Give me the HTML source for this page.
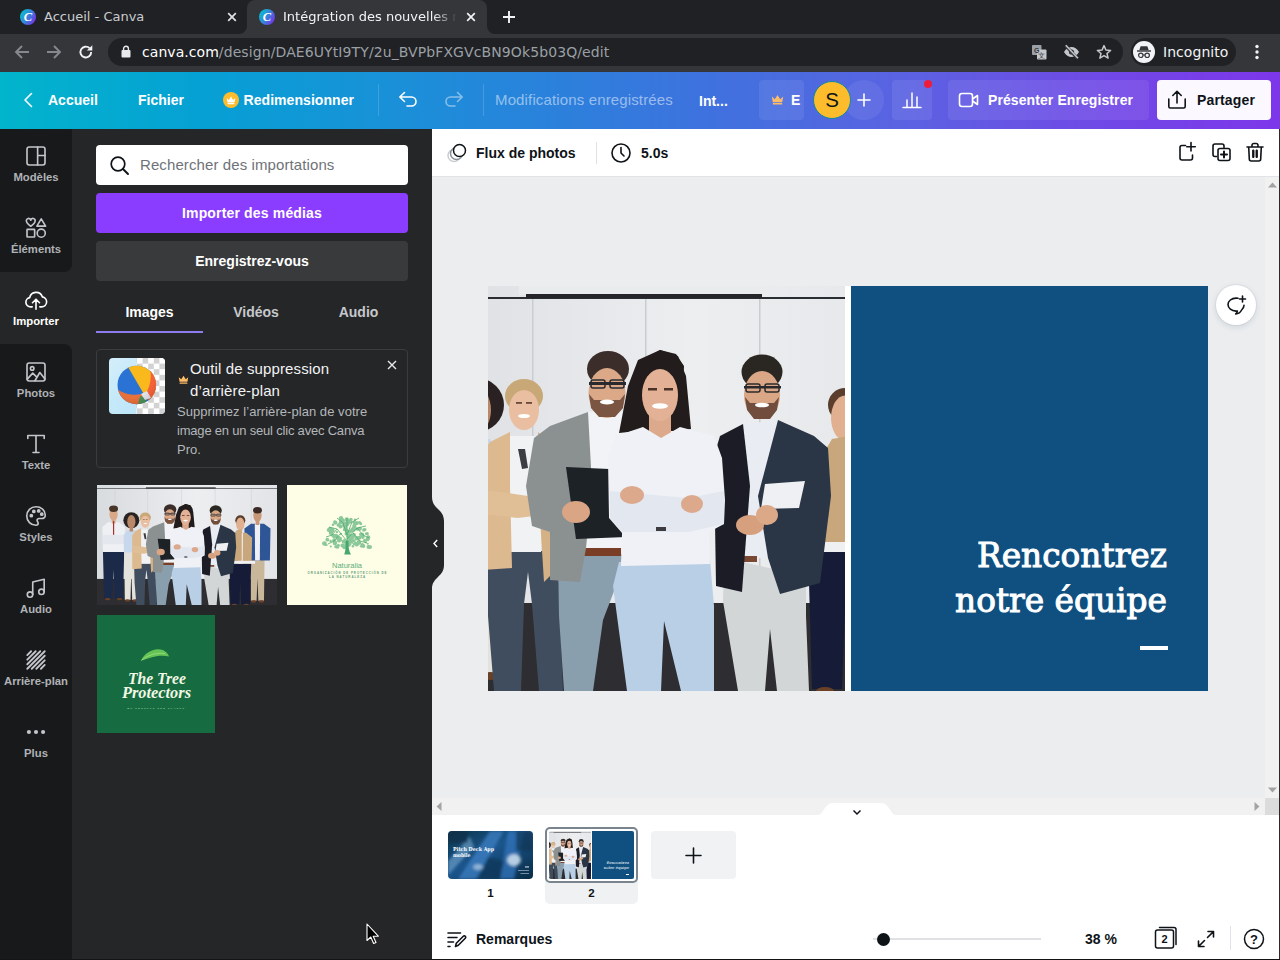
<!DOCTYPE html>
<html lang="fr">
<head>
<meta charset="utf-8">
<title>Intégration des nouvelles recrues - Canva</title>
<style>
*{box-sizing:border-box;margin:0;padding:0}
html,body{width:1280px;height:960px;overflow:hidden;background:#fff}
body{position:relative;font-family:"Liberation Sans",sans-serif;color:#fff}
.abs{position:absolute}
/* ---------- browser chrome ---------- */
#tabbar{position:absolute;left:0;top:0;width:1280px;height:34px;background:#202124}
#toolbar{position:absolute;left:0;top:34px;width:1280px;height:38px;background:#35363a}
.chrome{font-family:"DejaVu Sans","Liberation Sans",sans-serif}
.tabtitle{position:absolute;top:8px;font-size:13px;line-height:17px;white-space:nowrap;overflow:hidden}
#activetab{position:absolute;left:247px;top:0;width:240px;height:34px;background:#35363a;border-radius:8px 8px 0 0}
#omnibox{position:absolute;left:108px;top:38px;width:1015px;height:28px;border-radius:14px;background:#202124}
#url{position:absolute;left:142px;top:43px;font-size:14px;line-height:18px;color:#9aa0a6;white-space:nowrap;letter-spacing:0.05px}
#url b{font-weight:normal;color:#fff}
/* ---------- canva header ---------- */
#hdr{position:absolute;left:0;top:72px;width:1280px;height:56.700px;z-index:4;background:linear-gradient(90deg,#02b4cc 0%,#06a0d4 16%,#1a90d8 31%,#2c80dc 44%,#3e72de 55%,#5a63e2 70%,#7049e6 86%,#7d36ea 100%)}
.hb{position:absolute;font-weight:bold;font-size:14px;line-height:20px;white-space:nowrap;color:#fff}
/* ---------- left rail ---------- */
#rail{position:absolute;left:0;top:128px;width:72px;height:832px;background:#252627}
.ri{position:absolute;left:0;width:72px;height:72px;text-align:center;color:#afb2b6;font-size:11.300px;font-weight:bold}
.ri span{position:absolute;left:-10px;width:92px;top:41px;line-height:16px;text-align:center}
.ri svg{position:absolute;left:24px;top:16px;transform:scale(1.090);color:#c3c6ca}
.ri[style*="#fff"] svg{color:#fff}
#panel{position:absolute;left:72px;top:128px;width:360px;height:832px;background:#252627}
/* ---------- editor ---------- */
#edbar{position:absolute;left:432px;top:128px;width:848px;height:49px;background:#fff;border-bottom:1px solid #e1e4e7}
#stage{position:absolute;left:432px;top:177px;width:848px;height:638px;background:#ebedef}
#bottom{position:absolute;left:432px;top:815px;width:848px;height:145px;background:#fff}
.dk{color:#0e1318}
.pb{left:24px;width:312px;height:40px;border-radius:4px;color:#fff;font-weight:bold;font-size:14px;line-height:40px;text-align:center}
.tb{top:174px;height:20px;line-height:20px;font-size:14px;font-weight:bold;text-align:center;color:#c5c8cc}
</style>
</head>
<body>
<!--PHOTOSYM--><svg width="0" height="0" style="position:absolute"><defs><linearGradient id="wallg" x1="0" y1="0" x2="1" y2="0"><stop offset="0" stop-color="#d9dcdf"/><stop offset="0.300" stop-color="#e3e5e8"/><stop offset="0.550" stop-color="#eceef0"/><stop offset="1" stop-color="#e2e4e7"/></linearGradient><filter id="pblur" x="0" y="0" width="1" height="1"><feGaussianBlur stdDeviation="0.550"/></filter><symbol id="teamphoto" viewBox="0 0 608 405" preserveAspectRatio="none"><g filter="url(#pblur)"><rect x="0" y="0" width="608" height="405" fill="url(#wallg)"/><rect x="0" y="317" width="608" height="88" fill="#2d2e31"/><rect x="0" y="11" width="608" height="2" fill="#2c2e32"/><rect x="158" y="0" width="247" height="9" fill="#e9ebed"/><rect x="165" y="8" width="236" height="4" fill="#25272b"/><rect x="171" y="13" width="1.5" height="300" fill="#c9ccd0"/><rect x="284" y="13" width="1.5" height="300" fill="#c9ccd0"/><rect x="398" y="13" width="1.5" height="300" fill="#c9ccd0"/><rect x="60" y="13" width="1.500" height="300" fill="#c9ccd0"/><rect x="520" y="13" width="1.500" height="300" fill="#c9ccd0"/><polygon points="20,222 92,222 88,383 59,383 56,286 53,383 24,383" fill="#1f2a4a"/><polygon points="18,142 37,126 75,126 94,142 92,226 20,226" fill="#eef0f4"/><rect x="50" y="116" width="12" height="14" fill="#d9a888"/><ellipse cx="56" cy="98" rx="14" ry="22.5" fill="#d9a888"/><ellipse cx="56" cy="80" rx="15" ry="11" fill="#4a3527"/><ellipse cx="36" cy="385" rx="9" ry="4" fill="#6b3f26"/><ellipse cx="76" cy="385" rx="9" ry="4" fill="#6b3f26"/><rect x="54" y="122" width="4" height="75" fill="#a8322c"/><polygon points="20,168 92,168 92,200 20,200" fill="#e4e7ee"/><polygon points="518,251 566,251 564,391 545,391 542,315 539,391 520,391" fill="#c9b79a"/><polygon points="498,147 520,131 564,131 586,147 584,255 500,255" fill="#2e5596"/><polygon points="533,131 551,131 550,255 534,255" fill="#eef0f4"/><rect x="536" y="121" width="12" height="14" fill="#c99878"/><ellipse cx="542" cy="102" rx="14" ry="22.5" fill="#c99878"/><ellipse cx="542" cy="85" rx="15" ry="11" fill="#3a2c25"/><ellipse cx="529" cy="393" rx="9" ry="4" fill="#6b3f26"/><ellipse cx="555" cy="393" rx="9" ry="4" fill="#6b3f26"/><ellipse cx="484" cy="119" rx="17" ry="17" fill="#5a3d2c"/><polygon points="447,261 521,261 517,403 487,403 484,325 481,403 451,403" fill="#151e39"/><polygon points="444,177 464,161 504,161 524,177 522,265 446,265" fill="#c9a77b"/><polygon points="475,161 493,161 492,265 476,265" fill="#f0f1f3"/><rect x="478" y="151" width="12" height="14" fill="#e0b090"/><ellipse cx="484" cy="132" rx="14" ry="22.5" fill="#e0b090"/><ellipse cx="464" cy="405" rx="9" ry="4" fill="#6b3f26"/><ellipse cx="504" cy="405" rx="9" ry="4" fill="#6b3f26"/><rect x="456" y="256" width="78" height="10" fill="#eef0f2"/><polygon points="462,168 471,153 489,150 489,256 460,256" fill="#c9a77b"/><ellipse cx="116" cy="119" rx="27" ry="27" fill="#2a2422"/><polygon points="92,224 140,224 138,388 119,388 116,288 113,388 94,388" fill="#e4e2dc"/><polygon points="90,169 103,153 129,153 142,169 141,228 91,228" fill="#c8d8ec"/><rect x="110" y="143" width="12" height="14" fill="#b98868"/><ellipse cx="116" cy="124" rx="14" ry="22.5" fill="#b98868"/><ellipse cx="103" cy="390" rx="9" ry="4" fill="#6b3f26"/><ellipse cx="129" cy="390" rx="9" ry="4" fill="#6b3f26"/><polygon points="125,265 197,265 199,330 202,405 178,405 171,318 167,286 163,318 160,405 133,405 127,330" fill="#414e5e"/><polygon points="145,150 183,150 180,266 149,266" fill="#f1f2f4"/><polygon points="149,146 129,156 119,170 119,284 151,282 149,200" fill="#dcb98f"/><polygon points="177,146 189,158 197,200 195,284 183,296 177,200" fill="#d5b186"/><polygon points="119,203 167,210 189,205 189,228 157,232 119,228" fill="#e0bf97"/><ellipse cx="163" cy="110" rx="19" ry="17" fill="#c9a877"/><ellipse cx="163" cy="124" rx="15" ry="20" fill="#e9bea1"/><ellipse cx="163" cy="130" rx="6" ry="2" fill="#fff"/><rect x="155" y="116" width="6" height="1.8" fill="#6a4a3a"/><rect x="165" y="116" width="6" height="1.8" fill="#6a4a3a"/><polygon points="157,163 164,163 167,182 161,183" fill="#3a3d42"/><polygon points="197,268 262,268 255,300 242,334 232,405 203,405 198,330" fill="#8a9fae"/><polygon points="225,126 264,126 266,264 223,264" fill="#f1f3f6"/><rect x="222" y="262" width="38" height="8" fill="#7a3e28"/><polygon points="227,126 189,140 173,152 165,200 171,240 189,246 189,294 219,296 225,262 231,200" fill="#8b9091"/><polygon points="205,181 248,183 265,251 215,253" fill="#1e2025"/><ellipse cx="215" cy="226" rx="14" ry="11" fill="#d9a585"/><ellipse cx="247" cy="83" rx="21" ry="18" fill="#3b2f2a"/><ellipse cx="246" cy="107" rx="18.5" ry="25" fill="#dba888"/><polygon points="228,108 233,114 259,114 264,108 262,122 254,131 238,131 230,122" fill="#7a5443"/><ellipse cx="246" cy="116" rx="7" ry="2.5" fill="#fff"/><rect x="228" y="96" width="37" height="3" fill="#2a2a2e"/><rect x="230" y="94" width="14" height="8" fill="none" stroke="#2a2a2e" stroke-width="1.500" rx="2"/><rect x="249" y="94" width="14" height="8" fill="none" stroke="#2a2a2e" stroke-width="1.500" rx="2"/><polygon points="363,272 445,290 445,330 448,405 416,405 409,343 404,405 377,405 362,315" fill="#d3d6d6"/><polygon points="381,138 419,134 415,272 379,272" fill="#e9edf3"/><rect x="379" y="270" width="17" height="6" fill="#7a4630"/><polygon points="382,138 359,150 353,170 355,300 381,306 389,200" fill="#1b1e27"/><polygon points="417,134 453,150 467,162 470,210 459,297 419,308 407,272 397,210" fill="#2b3444"/><polygon points="404,198 444,195 438,222 400,223" fill="#eef0f3"/><ellipse cx="389" cy="239" rx="14" ry="10" fill="#d6a07e"/><ellipse cx="406" cy="229" rx="11" ry="10" fill="#dba888"/><ellipse cx="401" cy="86" rx="20.5" ry="17.5" fill="#2b2623"/><ellipse cx="401" cy="109" rx="18" ry="24" fill="#d9a785"/><polygon points="384,111 389,117 413,117 418,111 416,124 409,133 393,133 386,124" fill="#6f4d3d"/><ellipse cx="401" cy="119" rx="7" ry="2.3" fill="#fff"/><rect x="383" y="100" width="37" height="2.5" fill="#2a2a2e"/><rect x="385" y="98" width="14" height="8" fill="none" stroke="#2a2a2e" stroke-width="1.500" rx="2"/><rect x="404" y="98" width="14" height="8" fill="none" stroke="#2a2a2e" stroke-width="1.500" rx="2"/><polygon points="258,276 349,274 353,320 353,405 320,405 303,335 300,405 266,405 252,300" fill="#b9cfe6"/><polygon points="299,64 317,70 325,90 330,143 315,145 277,145 258,147 267,100 277,74" fill="#241c1b"/><rect x="288" y="128" width="22" height="24" fill="#dca98c"/><polygon points="282,141 255,150 247,172 248,232 261,247 260,280 349,278 348,246 363,238 364,214 361,172 353,150 319,141 300,152" fill="#eff1f6"/><polygon points="249,205 327,212 363,205 363,238 327,246 261,246 249,232" fill="#e3e7ef"/><ellipse cx="271" cy="209" rx="12" ry="9" fill="#dca98c"/><rect x="295" y="241" width="10" height="4" fill="#3a3a40"/><ellipse cx="331" cy="218" rx="11" ry="9" fill="#dca98c"/><ellipse cx="299" cy="109" rx="18" ry="26" fill="#e3b296"/><ellipse cx="299" cy="120" rx="8" ry="2.8" fill="#fff"/><rect x="287" y="102" width="9" height="2.5" fill="#4a3028"/><rect x="303" y="102" width="9" height="2.5" fill="#4a3028"/><polygon points="299,64 279,76 277,100 287,82 303,78 319,86 322,104 323,80 315,68" fill="#241c1b"/></g></symbol></defs></svg><!--/PHOTOSYM-->
<!-- browser chrome -->
<div id="tabbar" class="chrome">
  <svg class="abs" style="left:20px;top:9px" width="16" height="16" viewBox="0 0 16 16"><defs><linearGradient id="cg" x1="0" y1="0.2" x2="1" y2="0.8"><stop offset="0" stop-color="#00c4cc"/><stop offset="0.55" stop-color="#3f7bdc"/><stop offset="1" stop-color="#7d2ae8"/></linearGradient></defs><circle cx="8" cy="8" r="8" fill="url(#cg)"/><text x="8" y="12.2" font-family="Liberation Serif,serif" font-style="italic" font-weight="bold" font-size="12.5" fill="#fff" text-anchor="middle">C</text></svg>
  <div class="tabtitle" style="left:44px;width:180px;color:#c9ccd0">Accueil - Canva</div>
  <svg class="abs" style="left:227px;top:12px" width="10" height="10" viewBox="0 0 10 10"><path d="M1.2 1.2L8.8 8.8M8.8 1.2L1.2 8.8" stroke="#dfe1e5" stroke-width="1.7" fill="none"/></svg>
  <div id="activetab"></div>
  <svg class="abs" style="left:239px;top:26px" width="8" height="8" viewBox="0 0 8 8"><path d="M8 0V8H0A8 8 0 0 0 8 0Z" fill="#35363a"/></svg>
  <svg class="abs" style="left:487px;top:26px" width="8" height="8" viewBox="0 0 8 8"><path d="M0 0V8H8A8 8 0 0 1 0 0Z" fill="#35363a"/></svg>
  <svg class="abs" style="left:259px;top:9px" width="16" height="16" viewBox="0 0 16 16"><circle cx="8" cy="8" r="8" fill="url(#cg)"/><text x="8" y="12.2" font-family="Liberation Serif,serif" font-style="italic" font-weight="bold" font-size="12.5" fill="#fff" text-anchor="middle">C</text></svg>
  <div class="tabtitle" style="left:283px;width:176px;color:#f1f3f4;-webkit-mask-image:linear-gradient(90deg,#000 0,#000 150px,transparent 174px);mask-image:linear-gradient(90deg,#000 0,#000 150px,transparent 174px)">Intégration des nouvelles recrues</div>
  <svg class="abs" style="left:466px;top:12px" width="10" height="10" viewBox="0 0 10 10"><path d="M1.2 1.2L8.8 8.8M8.8 1.2L1.2 8.8" stroke="#f1f3f4" stroke-width="1.7" fill="none"/></svg>
  <svg class="abs" style="left:502px;top:10px" width="14" height="14" viewBox="0 0 14 14"><path d="M7 1V13M1 7H13" stroke="#f1f3f4" stroke-width="1.9" fill="none"/></svg>
</div>
<div id="toolbar" class="chrome"></div>
<svg class="abs" style="left:14px;top:44px" width="16" height="16" viewBox="0 0 16 16"><path d="M15 8H2.5M8 2L2 8L8 14" stroke="#85888c" stroke-width="1.9" fill="none"/></svg>
<svg class="abs" style="left:46px;top:44px" width="16" height="16" viewBox="0 0 16 16"><path d="M1 8H13.5M8 2L14 8L8 14" stroke="#85888c" stroke-width="1.9" fill="none"/></svg>
<svg class="abs" style="left:78px;top:44px" width="16" height="16" viewBox="0 0 16 16"><path d="M13.2 8A5.4 5.4 0 1 1 11.6 4.2" stroke="#f1f3f4" stroke-width="1.9" fill="none"/><path d="M14.3 1.2V6.6H8.9Z" fill="#f1f3f4"/></svg>
<div id="omnibox"></div>
<svg class="abs" style="left:121px;top:45px" width="10" height="13" viewBox="0 0 10 13"><rect x="0.5" y="5" width="9" height="7.5" rx="1" fill="#e8eaed"/><path d="M2.6 5.5V3.6A2.4 2.4 0 0 1 7.4 3.6V5.5" stroke="#e8eaed" stroke-width="1.4" fill="none"/></svg>
<div id="url" class="chrome"><b>canva.com</b><span style="letter-spacing:0.1px">/design/DAE6UYtI9TY/2u_BVPbFXGVcBN9Ok5b03Q/edit</span></div>
<!-- translate / eye-off / star -->
<svg class="abs" style="left:1031px;top:44px" width="16" height="16" viewBox="0 0 16 16"><rect x="1" y="1" width="9.5" height="10" rx="1" fill="#9aa0a6"/><rect x="6" y="5.5" width="9.5" height="10" rx="1" fill="#c4c7cc"/><text x="5.7" y="8.8" font-size="7" font-weight="bold" fill="#35363a" text-anchor="middle" font-family="Liberation Sans,sans-serif">G</text><text x="10.8" y="13.8" font-size="7" fill="#35363a" text-anchor="middle" font-family="Liberation Sans,sans-serif">文</text></svg>
<svg class="abs" style="left:1063px;top:44px" width="17" height="16" viewBox="0 0 17 16"><path d="M1 8C3 4.400 5.500 3 8.500 3C11.500 3 14 4.400 16 8C14 11.600 11.500 13 8.500 13C5.500 13 3 11.600 1 8Z" fill="#c4c7cc"/><circle cx="8.500" cy="8" r="2.600" fill="#35363a"/><path d="M2.500 1.500L14.500 14.500" stroke="#35363a" stroke-width="3.200"/><path d="M2.800 1.200L15 14.200" stroke="#c4c7cc" stroke-width="1.500"/></svg>
<svg class="abs" style="left:1096px;top:44px" width="16" height="16" viewBox="0 0 16 16"><path d="M8 1.600L9.900 6L14.600 6.400L11 9.500L12.100 14.100L8 11.700L3.900 14.100L5 9.500L1.400 6.400L6.100 6Z" stroke="#c4c7cc" stroke-width="1.500" fill="none" stroke-linejoin="round"/></svg>
<div class="abs" style="left:1131px;top:38px;width:105px;height:28px;border-radius:14px;background:#202124"></div>
<svg class="abs" style="left:1133px;top:41px" width="22" height="22" viewBox="0 0 22 22"><circle cx="11" cy="11" r="11" fill="#f1f3f4"/><path d="M6.300 9.300L7.600 5.200H14.400L15.700 9.300Z" fill="#35363a"/><rect x="4" y="9.300" width="14" height="1.400" fill="#35363a"/><circle cx="7.800" cy="14.300" r="2.200" stroke="#35363a" stroke-width="1.200" fill="none"/><circle cx="14.200" cy="14.300" r="2.200" stroke="#35363a" stroke-width="1.200" fill="none"/><path d="M10 14H12" stroke="#35363a" stroke-width="1.200"/></svg>
<div class="abs chrome" style="left:1163px;top:43px;font-size:14px;line-height:18px;letter-spacing:0.050px;color:#f1f3f4">Incognito</div>
<svg class="abs" style="left:1255px;top:44px" width="4" height="16" viewBox="0 0 4 16"><circle cx="2" cy="2.500" r="1.700" fill="#f1f3f4"/><circle cx="2" cy="8" r="1.700" fill="#f1f3f4"/><circle cx="2" cy="13.500" r="1.700" fill="#f1f3f4"/></svg>
<!-- canva header -->
<div id="hdr">
  <svg class="abs" style="left:22px;top:20px" width="12" height="16" viewBox="0 0 12 16"><path d="M9.500 1.500L3 8L9.500 14.500" stroke="#fff" stroke-width="1.600" fill="none" stroke-linecap="round" stroke-linejoin="round"/></svg>
  <div class="hb" style="left:48px;top:18px">Accueil</div>
  <div class="hb" style="left:138px;top:18px">Fichier</div>
  <svg class="abs" style="left:223px;top:20px" width="16" height="16" viewBox="0 0 16 16"><circle cx="8" cy="8" r="8" fill="#fdbc2c"/><path d="M3.700 6L5.900 8L8 4.600L10.100 8L12.300 6L11.500 10.400H4.500Z" fill="#fff"/><rect x="4.500" y="11" width="7" height="1.200" rx="0.500" fill="#fff"/></svg>
  <div class="hb" style="left:243.5px;top:18px;letter-spacing:0.06px">Redimensionner</div>
  <div class="abs" style="left:378px;top:12px;width:1px;height:32px;background:rgba(255,255,255,0.160)"></div>
  <svg class="abs" style="left:396px;top:16px" width="24" height="24" viewBox="0 0 24 24"><path d="M8.500 4.500L3.800 9L8.500 13.500M4.200 9H15.500A4.500 4.500 0 0 1 15.500 18H11" stroke="#fff" stroke-width="1.600" fill="none" stroke-linecap="round" stroke-linejoin="round"/></svg>
  <svg class="abs" style="left:442px;top:16px;opacity:0.45" width="24" height="24" viewBox="0 0 24 24"><path d="M15.500 4.500L20.200 9L15.500 13.500M19.800 9H8.500A4.500 4.500 0 0 0 8.500 18H13" stroke="#fff" stroke-width="1.600" fill="none" stroke-linecap="round" stroke-linejoin="round"/></svg>
  <div class="abs" style="left:483px;top:12px;width:1px;height:32px;background:rgba(255,255,255,0.160)"></div>
  <div class="hb" style="left:495px;top:18px;font-weight:normal;font-size:15px;letter-spacing:0.14px;color:rgba(255,255,255,0.5)">Modifications enregistrées</div>
  <div class="hb" style="left:699px;top:19px">Int...</div>
  <div class="abs" style="left:759px;top:8px;width:45px;height:40px;border-radius:4px;background:rgba(255,255,255,0.08)"></div>
  <svg class="abs" style="left:771px;top:22px" width="13" height="12" viewBox="0 0 13 12"><path d="M0.800 2.600L3.800 5.200L6.500 1L9.200 5.200L12.200 2.600L11.200 8.200H1.800Z" fill="#fdbc68"/><rect x="1.800" y="9" width="9.400" height="1.500" rx="0.600" fill="#fdbc68"/></svg>
  <div class="hb" style="left:791px;top:18px">E</div>
  <div class="abs" style="left:844px;top:8px;width:40px;height:40px;border-radius:20px;background:rgba(255,255,255,0.07)"></div>
  <div class="abs" style="left:813px;top:9px;width:38px;height:38px;border-radius:19px;background:#fdbc2c;border:1.500px solid #128a9c;color:#0e1318;text-align:center;font-size:20.500px;line-height:35px">S</div>
  <svg class="abs" style="left:857px;top:21px" width="14" height="14" viewBox="0 0 14 14"><path d="M7 1V13M1 7H13" stroke="#fff" stroke-width="1.600" fill="none" stroke-linecap="round"/></svg>
  <div class="abs" style="left:892px;top:8px;width:40px;height:40px;border-radius:4px;background:rgba(255,255,255,0.08)"></div>
  <svg class="abs" style="left:902px;top:19px" width="20" height="18" viewBox="0 0 20 18"><path d="M1 16.500H19M5 16V9M10 16V2M15 16V6" stroke="#fff" stroke-width="1.500" fill="none" stroke-linecap="round"/></svg>
  <div class="abs" style="left:924px;top:8px;width:8px;height:8px;border-radius:4px;background:#ee1c3c"></div>
  <div class="abs" style="left:948px;top:8px;width:201px;height:40px;border-radius:4px;background:rgba(255,255,255,0.08)"></div>
  <svg class="abs" style="left:958px;top:19px" width="22" height="18" viewBox="0 0 22 18"><rect x="1.500" y="2.500" width="13" height="13" rx="2.500" stroke="#fff" stroke-width="1.600" fill="none"/><path d="M14.500 8L19.500 4.500V13.500L14.500 10" stroke="#fff" stroke-width="1.600" fill="none" stroke-linejoin="round"/></svg>
  <div class="hb" style="left:988px;top:18px;letter-spacing:0.09px">Présenter Enregistrer</div>
  <div class="abs" style="left:1157px;top:8px;width:114px;height:40px;border-radius:4px;background:#fbf9ff"></div>
  <svg class="abs" style="left:1167px;top:17px" width="20" height="22" viewBox="0 0 20 22"><path d="M10 14V2.500M5.800 6.500L10 2.300L14.200 6.500M1.800 10V17.500A1.500 1.500 0 0 0 3.300 19H16.700A1.500 1.500 0 0 0 18.200 17.500V10" stroke="#0e1318" stroke-width="1.600" fill="none" stroke-linecap="round" stroke-linejoin="round"/></svg>
  <div class="hb dk" style="left:1197px;top:18px;letter-spacing:0.15px">Partager</div>
</div>
<!-- left -->
<div id="rail">
  <div class="abs" style="left:0;top:144px;width:72px;height:72px;background:#252627"></div>
  <div class="abs" style="left:0;top:0;width:72px;height:144px;background:#18191b;border-radius:0 0 8px 0"></div>
  <div class="abs" style="left:0;top:216px;width:72px;height:616px;background:#18191b;border-radius:0 8px 0 0"></div>
  <div class="ri" style="top:0px"><svg width="24" height="24" viewBox="0 0 24 24" fill="none" stroke="currentColor" stroke-width="1.500" stroke-linecap="round" stroke-linejoin="round"><rect x="3.750" y="3.750" width="16.500" height="16.500" rx="2"/><path d="M13.500 3.750V20.250M13.500 11.500H20.250"/></svg><span>Modèles</span></div>
  <div class="ri" style="top:72px"><svg width="24" height="24" viewBox="0 0 24 24" fill="none" stroke="currentColor" stroke-width="1.500" stroke-linecap="round" stroke-linejoin="round"><path d="M7.200 10.400C4.700 8.600 3.200 7.200 3.200 5.600A2 2 0 0 1 7.200 4.900A2 2 0 0 1 11.200 5.600C11.200 7.200 9.700 8.600 7.200 10.400Z"/><path d="M16.800 3.600L20.800 10.300H12.800Z"/><rect x="3.750" y="13.250" width="7" height="7" rx="0.500"/><circle cx="16.800" cy="16.750" r="3.700"/></svg><span>Éléments</span></div>
  <div class="ri" style="top:144px;color:#fff"><svg width="24" height="24" viewBox="0 0 24 24" fill="none" stroke="currentColor" stroke-width="1.500" stroke-linecap="round" stroke-linejoin="round"><path d="M8.500 18.250H7A4.250 4.250 0 0 1 6.200 9.820A6 6 0 0 1 17.800 9.100A4.600 4.600 0 0 1 17 18.250H15.500"/><path d="M12 20.500V11.500M8.800 14.500L12 11.300L15.200 14.500"/></svg><span>Importer</span></div>
  <div class="ri" style="top:216px"><svg width="24" height="24" viewBox="0 0 24 24" fill="none" stroke="currentColor" stroke-width="1.500" stroke-linecap="round" stroke-linejoin="round"><rect x="3.750" y="3.750" width="16.500" height="16.500" rx="2"/><circle cx="8.500" cy="8.700" r="1.600"/><path d="M4 18.500L9 13L12.500 16.500M11 20L15.500 12.500L20.250 18.500"/></svg><span>Photos</span></div>
  <div class="ri" style="top:288px"><svg width="24" height="24" viewBox="0 0 24 24" fill="none" stroke="currentColor" stroke-width="1.500" stroke-linecap="round" stroke-linejoin="round"><path d="M4.500 7V4.250H19.500V7M12 4.250V19.750M9.250 19.750H14.750"/></svg><span>Texte</span></div>
  <div class="ri" style="top:360px"><svg width="24" height="24" viewBox="0 0 24 24" fill="none" stroke="currentColor" stroke-width="1.500" stroke-linecap="round" stroke-linejoin="round"><path d="M12 3.500A8.500 8.500 0 0 0 12 20.500C13.300 20.500 14 19.700 14 18.700C14 17.400 13 17.200 13 16C13 14.900 13.900 14.300 15 14.300H17C19.200 14.300 20.500 12.800 20.500 11C20.500 6.600 16.700 3.500 12 3.500Z"/><circle cx="7.700" cy="11.700" r="1" fill="currentColor"/><circle cx="10" cy="7.800" r="1" fill="currentColor"/><circle cx="14.500" cy="7.300" r="1" fill="currentColor"/><circle cx="17.300" cy="10.300" r="1" fill="currentColor"/></svg><span>Styles</span></div>
  <div class="ri" style="top:432px"><svg width="24" height="24" viewBox="0 0 24 24" fill="none" stroke="currentColor" stroke-width="1.500" stroke-linecap="round" stroke-linejoin="round"><circle cx="6.500" cy="18" r="2.500"/><circle cx="17" cy="15.500" r="2.500"/><path d="M9 18V6.500L19.500 4V15.500"/></svg><span>Audio</span></div>
  <div class="ri" style="top:504px"><svg width="24" height="24" viewBox="0 0 24 24" fill="none" stroke="currentColor" stroke-width="1.500" stroke-linecap="round" stroke-linejoin="round" style="stroke-width:1.700"><path d="M4 7.500L7.500 4M4 11.700L11.700 4M4 15.900L15.900 4M4 20L20 4M8.100 20L20 8.100M12.300 20L20 12.300M16.500 20L20 16.500"/></svg><span>Arrière-plan</span></div>
  <div class="ri" style="top:576px"><svg width="24" height="24" viewBox="0 0 24 24" fill="none" stroke="currentColor" stroke-width="1.500" stroke-linecap="round" stroke-linejoin="round"><circle cx="5.500" cy="12" r="1.900" fill="currentColor" stroke="none"/><circle cx="12" cy="12" r="1.900" fill="currentColor" stroke="none"/><circle cx="18.500" cy="12" r="1.900" fill="currentColor" stroke="none"/></svg><span>Plus</span></div>
</div>
<div id="panel">
  <div class="abs" style="left:24px;top:17px;width:312px;height:40px;border-radius:4px;background:#fff"></div>
  <svg class="abs" style="left:37px;top:27px" width="21" height="21" viewBox="0 0 21 21"><circle cx="9" cy="9" r="6.800" stroke="#0e1318" stroke-width="1.700" fill="none"/><path d="M14 14L19 19" stroke="#0e1318" stroke-width="1.900" stroke-linecap="round"/></svg>
  <div class="abs" style="left:68px;top:27px;font-size:15px;line-height:20px;letter-spacing:0.1px;color:#6f7378;white-space:nowrap">Rechercher des importations</div>
  <div class="abs pb" style="top:65px;background:#8b3dff;letter-spacing:0.16px">Importer des médias</div>
  <div class="abs pb" style="top:113px;background:#393a3c">Enregistrez-vous</div>
  <div class="abs tb" style="left:24px;width:107px;color:#fff">Images</div>
  <div class="abs tb" style="left:131px;width:106px">Vidéos</div>
  <div class="abs tb" style="left:237px;width:99px">Audio</div>
  <div class="abs" style="left:24px;top:203px;width:107px;height:2px;background:#8d7cf0"></div>
  <div class="abs" style="left:24px;top:221px;width:312px;height:119px;border:1px solid #3b3c3e;border-radius:4px"></div>
  <svg class="abs" style="left:37px;top:230px;border-radius:4px" width="56" height="56" viewBox="0 0 56 56">
    <defs><pattern id="chk" width="11.200" height="11.200" patternUnits="userSpaceOnUse"><rect width="11.200" height="11.200" fill="#fff"/><rect x="0" y="0" width="5.600" height="5.600" fill="#d2d2d2"/><rect x="5.600" y="5.600" width="5.600" height="5.600" fill="#d2d2d2"/></pattern>
    <linearGradient id="sky" x1="0" y1="0" x2="1" y2="1"><stop offset="0" stop-color="#d4eefb"/><stop offset="0.500" stop-color="#c3e8f9"/><stop offset="1" stop-color="#b4e4f8"/></linearGradient>
    <clipPath id="bc"><circle cx="27.800" cy="27" r="19.300"/></clipPath>
    <radialGradient id="bsh" cx="0.400" cy="0.300" r="0.750"><stop offset="0.550" stop-color="#000" stop-opacity="0"/><stop offset="1" stop-color="#000" stop-opacity="0.250"/></radialGradient></defs>
    <rect width="56" height="56" fill="url(#sky)"/><rect x="27.500" width="28.500" height="56" fill="url(#chk)"/>
    <g clip-path="url(#bc)"><rect width="56" height="56" fill="#2a73d4"/>
      <path d="M19 9L36 38L56 40V0H19Z" fill="#f9b81c"/>
      <path d="M41 11C43 20 41 30 35 38L44 46L56 30V8Z" fill="#f4623a"/>
      <path d="M5 29C14 36 24 38 32 36L36 38L30 52H5Z" fill="#e8703a"/>
      <path d="M31 38L37 40L38 50L28 50Z" fill="#4f8f58"/>
      <path d="M32 36L38 33L42 40L36 42Z" fill="#dfe3ea"/>
      <rect width="56" height="56" fill="url(#bsh)"/></g>
  </svg>
  <svg class="abs" style="left:106px;top:247px" width="11" height="10" viewBox="0 0 13 12"><path d="M0.800 2.600L3.800 5.200L6.500 1L9.200 5.200L12.200 2.600L11.200 8.200H1.800Z" fill="#fdbc68"/><rect x="1.800" y="9" width="9.400" height="1.500" rx="0.600" fill="#fdbc68"/></svg>
  <div class="abs" style="left:118px;top:230px;font-size:15px;line-height:22px;letter-spacing:0.12px;color:#f2f3f5;white-space:nowrap">Outil de suppression<br>d’arrière-plan</div>
  <div class="abs" style="left:105px;top:274px;font-size:13px;line-height:19px;color:#b4b7bb;white-space:nowrap"><span style="letter-spacing:0.050px">Supprimez l’arrière-plan de votre</span><br><span style="letter-spacing:-0.200px">image en un seul clic avec Canva</span><br>Pro.</div>
  <svg class="abs" style="left:315px;top:232px" width="10" height="10" viewBox="0 0 10 10"><path d="M1 1L9 9M9 1L1 9" stroke="#e8eaed" stroke-width="1.400" fill="none"/></svg>
  <svg class="abs" style="left:25px;top:357px" width="180" height="120" viewBox="0 0 608 405" preserveAspectRatio="none"><use href="#teamphoto" x="0" y="0" width="608" height="405"/></svg>
  <svg class="abs" style="left:215px;top:357px" width="120" height="120" viewBox="0 0 120 120"><rect width="120" height="120" fill="#fefde6"/><g fill="#46a86c" opacity="0.620"><circle cx="57.5" cy="40.2" r="2.2"/><circle cx="58.3" cy="41.3" r="1.8"/><circle cx="46.7" cy="50.7" r="1.8"/><circle cx="65.0" cy="57.4" r="1.4"/><circle cx="40.3" cy="54.7" r="1.9"/><circle cx="37.4" cy="58.5" r="2.3"/><circle cx="68.2" cy="41.5" r="1.2"/><circle cx="43.8" cy="61.5" r="1.1"/><circle cx="51.3" cy="54.5" r="1.0"/><circle cx="58.3" cy="42.9" r="2.1"/><circle cx="61.1" cy="38.3" r="1.6"/><circle cx="67.3" cy="44.9" r="1.4"/><circle cx="82.9" cy="62.0" r="2.1"/><circle cx="67.4" cy="49.4" r="1.3"/><circle cx="56.7" cy="56.8" r="2.0"/><circle cx="53.5" cy="35.6" r="1.5"/><circle cx="80.8" cy="58.8" r="1.0"/><circle cx="42.7" cy="44.5" r="1.6"/><circle cx="73.8" cy="61.3" r="1.1"/><circle cx="67.9" cy="37.7" r="1.4"/><circle cx="47.9" cy="57.9" r="2.3"/><circle cx="65.1" cy="55.9" r="1.3"/><circle cx="55.4" cy="60.4" r="2.0"/><circle cx="45.8" cy="50.6" r="1.6"/><circle cx="44.0" cy="47.8" r="1.2"/><circle cx="63.1" cy="53.9" r="1.5"/><circle cx="51.2" cy="53.1" r="2.3"/><circle cx="69.7" cy="53.2" r="2.2"/><circle cx="49.1" cy="51.1" r="2.1"/><circle cx="62.8" cy="54.6" r="2.3"/><circle cx="51.4" cy="53.4" r="2.0"/><circle cx="54.0" cy="48.9" r="1.1"/><circle cx="43.6" cy="56.1" r="1.3"/><circle cx="64.2" cy="45.4" r="1.6"/><circle cx="75.3" cy="59.8" r="1.7"/><circle cx="68.3" cy="57.5" r="1.2"/><circle cx="79.7" cy="54.6" r="1.3"/><circle cx="43.9" cy="47.8" r="2.2"/><circle cx="41.8" cy="45.0" r="2.1"/><circle cx="64.6" cy="44.2" r="1.1"/><circle cx="37.6" cy="58.8" r="1.3"/><circle cx="66.5" cy="50.7" r="2.1"/><circle cx="63.5" cy="47.4" r="1.2"/><circle cx="63.4" cy="57.0" r="1.3"/><circle cx="63.9" cy="34.6" r="1.8"/><circle cx="46.0" cy="39.7" r="1.3"/><circle cx="48.8" cy="61.7" r="1.6"/><circle cx="51.3" cy="60.2" r="1.5"/><circle cx="61.7" cy="52.6" r="1.5"/><circle cx="81.4" cy="52.2" r="1.9"/><circle cx="69.7" cy="43.5" r="1.2"/><circle cx="57.5" cy="62.0" r="2.2"/><circle cx="73.3" cy="38.0" r="1.0"/><circle cx="66.4" cy="43.6" r="1.9"/><circle cx="47.6" cy="36.4" r="1.1"/><circle cx="62.8" cy="36.6" r="2.2"/><circle cx="72.9" cy="43.7" r="2.0"/><circle cx="72.5" cy="57.9" r="1.9"/><circle cx="80.3" cy="53.7" r="1.5"/><circle cx="76.8" cy="45.0" r="1.7"/><circle cx="65.2" cy="45.6" r="1.8"/><circle cx="61.9" cy="55.2" r="1.8"/><circle cx="81.4" cy="61.9" r="1.9"/><circle cx="53.3" cy="37.9" r="1.8"/><circle cx="56.1" cy="34.9" r="1.1"/><circle cx="62.4" cy="59.3" r="1.8"/><circle cx="59.4" cy="48.7" r="1.9"/><circle cx="59.8" cy="38.8" r="2.2"/><circle cx="58.6" cy="60.6" r="1.4"/><circle cx="65.1" cy="51.6" r="1.2"/><circle cx="77.5" cy="55.3" r="1.6"/><circle cx="71.7" cy="56.9" r="1.9"/><circle cx="48.2" cy="51.1" r="2.0"/><circle cx="80.7" cy="54.8" r="1.5"/><circle cx="63.2" cy="46.6" r="1.2"/><circle cx="59.8" cy="34.4" r="2.1"/><circle cx="73.8" cy="38.8" r="1.4"/><circle cx="47.2" cy="52.4" r="1.4"/><circle cx="48.9" cy="50.6" r="1.8"/><circle cx="59.8" cy="46.1" r="2.1"/><circle cx="74.8" cy="61.4" r="1.1"/><circle cx="38.8" cy="59.7" r="1.1"/><circle cx="70.3" cy="44.4" r="1.4"/><circle cx="62.1" cy="60.4" r="1.2"/><circle cx="59.6" cy="58.5" r="2.1"/><circle cx="54.3" cy="55.3" r="1.1"/><circle cx="65.8" cy="44.2" r="1.8"/><circle cx="69.6" cy="38.1" r="2.2"/><circle cx="65.2" cy="51.8" r="1.6"/><circle cx="58.4" cy="61.1" r="1.6"/><circle cx="65.6" cy="53.1" r="1.4"/><circle cx="51.2" cy="40.0" r="1.7"/><circle cx="66.9" cy="37.6" r="1.5"/><circle cx="77.3" cy="44.6" r="1.1"/><circle cx="78.8" cy="57.1" r="1.2"/><circle cx="57.4" cy="38.8" r="2.2"/><circle cx="53.6" cy="41.5" r="2.1"/><circle cx="77.9" cy="44.6" r="1.6"/><circle cx="64.4" cy="51.0" r="1.9"/><circle cx="75.2" cy="49.4" r="1.9"/><circle cx="43.0" cy="44.3" r="2.3"/><circle cx="76.3" cy="60.9" r="2.0"/><circle cx="48.3" cy="37.6" r="2.1"/><circle cx="57.3" cy="55.5" r="1.6"/><circle cx="63.1" cy="36.0" r="1.6"/><circle cx="39.6" cy="60.0" r="1.1"/><circle cx="67.1" cy="55.6" r="1.4"/><circle cx="66.1" cy="56.0" r="1.2"/><circle cx="61.0" cy="36.6" r="2.1"/><circle cx="72.5" cy="37.6" r="1.6"/><circle cx="65.9" cy="61.2" r="1.3"/><circle cx="61.0" cy="46.9" r="1.9"/><circle cx="66.8" cy="42.8" r="2.1"/><circle cx="62.3" cy="46.5" r="1.5"/><circle cx="79.2" cy="48.8" r="1.3"/><circle cx="80.2" cy="48.7" r="1.7"/><circle cx="62.2" cy="50.0" r="1.7"/><circle cx="60.2" cy="39.0" r="1.0"/><circle cx="75.9" cy="60.4" r="1.5"/><circle cx="73.6" cy="49.3" r="1.6"/><circle cx="62.9" cy="56.8" r="1.7"/><circle cx="54.0" cy="33.3" r="2.2"/><circle cx="49.9" cy="47.1" r="1.2"/><circle cx="55.7" cy="35.4" r="2.2"/><circle cx="59.1" cy="46.1" r="1.2"/><circle cx="68.0" cy="34.8" r="1.2"/><circle cx="62.2" cy="60.0" r="1.3"/><circle cx="45.9" cy="46.0" r="1.4"/><circle cx="52.2" cy="41.1" r="1.1"/><circle cx="64.8" cy="55.2" r="1.7"/><circle cx="53.3" cy="53.5" r="1.7"/><circle cx="57.4" cy="44.8" r="1.5"/><circle cx="60.8" cy="51.2" r="1.3"/><circle cx="67.2" cy="40.3" r="1.7"/><circle cx="75.7" cy="51.8" r="2.1"/><circle cx="45.5" cy="45.0" r="2.1"/><circle cx="71.6" cy="57.5" r="1.4"/><circle cx="69.7" cy="59.3" r="2.3"/><circle cx="67.1" cy="59.0" r="1.3"/><circle cx="67.2" cy="51.3" r="1.1"/><circle cx="72.4" cy="52.8" r="2.0"/><circle cx="47.1" cy="55.3" r="1.9"/><circle cx="50.5" cy="61.8" r="1.9"/><circle cx="81.7" cy="54.1" r="1.2"/><circle cx="60.4" cy="35.9" r="1.7"/><circle cx="65.1" cy="52.2" r="1.1"/><circle cx="56.4" cy="60.8" r="1.7"/><circle cx="60.8" cy="39.8" r="1.2"/><circle cx="52.0" cy="55.4" r="2.1"/><circle cx="82.0" cy="61.6" r="1.1"/></g><g stroke="#46a86c" stroke-width="0.900" fill="none" opacity="0.850"><path d="M60 68V50M60 56L50 44L42 42M60 54L70 43L79 41M60 50L56 38L50 33M60 50L65 37L72 33M50 44L45 50L39 52M70 43L76 50L82 53M60 46V33M54 48L47 56L41 59M66 48L73 56L80 58"/></g><path d="M57.200 69.500C58.600 66 58.800 62 58.600 56H61.600C61.400 62 61.800 66 64 69.500Z" fill="#46a86c"/><text x="60" y="83.200" font-family="Liberation Sans,sans-serif" font-size="7.200" fill="#5aae7b" text-anchor="middle" textLength="30" lengthAdjust="spacingAndGlyphs">Naturalia</text><text x="60" y="88.500" font-family="Liberation Sans,sans-serif" font-size="2.900" font-weight="bold" fill="#5f9c7b" text-anchor="middle" textLength="79" lengthAdjust="spacing">ORGANIZACIÓN DE PROTECCIÓN DE</text><text x="60" y="92.800" font-family="Liberation Sans,sans-serif" font-size="2.900" font-weight="bold" fill="#5f9c7b" text-anchor="middle" textLength="36" lengthAdjust="spacing">LA NATURALEZA</text></svg>
  <svg class="abs" style="left:25px;top:487px" width="118" height="118" viewBox="0 0 118 118"><rect width="118" height="118" fill="#176b40"/><path d="M44.200 45.500C47 39 54 34.500 61 34.300C66 34.200 70.500 37 72 41.500C67 40.500 62 40.500 56 42C51 43.300 47 45 44.200 45.500Z" fill="#63c455"/><path d="M44.200 45.500C50 40.500 58 37.500 68 38.500" stroke="#a8e08c" stroke-width="0.700" fill="none"/><text x="60" y="69" font-family="Liberation Serif,serif" font-style="italic" font-weight="bold" font-size="16" fill="#f1f8e4" text-anchor="middle" textLength="58" lengthAdjust="spacingAndGlyphs">The Tree</text><text x="59.500" y="82.600" font-family="Liberation Serif,serif" font-style="italic" font-weight="bold" font-size="16" fill="#f1f8e4" text-anchor="middle" textLength="69" lengthAdjust="spacingAndGlyphs">Protectors</text><text x="58.500" y="94.300" font-family="Liberation Serif,serif" font-size="2.400" font-weight="bold" fill="#bfe0b4" text-anchor="middle" textLength="57" lengthAdjust="spacing">WE PROTECT OUR PLANET</text></svg>
</div>
<svg class="abs" style="left:432px;top:497px;z-index:5" width="12" height="92" viewBox="0 0 12 92"><path d="M0 0C0 12 12 12 12 24V68C12 80 0 80 0 92Z" fill="#252627"/><path d="M5.200 43L2 46.500L5.200 50" stroke="#fff" stroke-width="1.400" fill="none"/></svg>
<!-- editor -->
<div id="edbar">
  <svg class="abs" style="left:13px;top:13px" width="24" height="24" viewBox="0 0 24 24" fill="#fff" stroke-width="1.500"><circle cx="9" cy="14.500" r="6" stroke="#c9ccd1"/><circle cx="11.500" cy="12.500" r="6" stroke="#8a9099"/><circle cx="14.500" cy="9.500" r="6" stroke="#0e1318"/></svg>
  <div class="abs dk" style="left:44px;top:15px;font-size:14px;line-height:20px;font-weight:bold;white-space:nowrap">Flux de photos</div>
  <div class="abs" style="left:164px;top:14px;width:1px;height:22px;background:#dfe2e6"></div>
  <svg class="abs" style="left:177px;top:13px" width="24" height="24" viewBox="0 0 24 24" fill="none" stroke="#0e1318" stroke-width="1.600" stroke-linecap="round" stroke-linejoin="round"><circle cx="12" cy="12" r="9"/><path d="M12 6.500V12L15 15"/></svg>
  <div class="abs dk" style="left:209px;top:15px;font-size:14px;line-height:20px;font-weight:bold;white-space:nowrap">5.0s</div>
  <svg class="abs" style="left:743px;top:12px" width="24" height="24" viewBox="0 0 24 24" fill="none" stroke="#0e1318" stroke-width="1.600" stroke-linecap="round" stroke-linejoin="round"><path d="M10.500 5.500H7A2 2 0 0 0 5 7.500V18A2 2 0 0 0 7 20H15.500A2 2 0 0 0 17.500 18V15M16 2.500V11M11.750 6.750H20.250"/></svg>
  <svg class="abs" style="left:777px;top:12px" width="24" height="24" viewBox="0 0 24 24" fill="none" stroke="#0e1318" stroke-width="1.600" stroke-linecap="round" stroke-linejoin="round"><path d="M7.500 16.500H6A2 2 0 0 1 4 14.500V6A2 2 0 0 1 6 4H13A2 2 0 0 1 15 6V7.500"/><rect x="9" y="8.500" width="12" height="12" rx="2"/><path d="M15 11.500V17.500M12 14.500H18" stroke-width="2"/></svg>
  <svg class="abs" style="left:811px;top:12px" width="24" height="24" viewBox="0 0 24 24" fill="none" stroke="#0e1318" stroke-width="1.600" stroke-linecap="round" stroke-linejoin="round"><path d="M4 7H20M9 7V5.200A1.700 1.700 0 0 1 10.700 3.500H13.300A1.700 1.700 0 0 1 15 5.200V7M5.700 7L6.300 19A2 2 0 0 0 8.300 21H15.700A2 2 0 0 0 17.700 19L18.300 7M10.300 10.500V17M13.700 10.500V17"/><path d="M10.300 10.500V17M13.700 10.500V17" stroke-width="2.200"/></svg>
</div>
<div id="stage">
  <div class="abs" style="left:833px;top:0;width:15px;height:621px;background:#f1f1f1"></div>
  <svg class="abs" style="left:836px;top:5px" width="9" height="6" viewBox="0 0 9 6"><path d="M0 5.500L4.500 0.500L9 5.500Z" fill="#a3a3a3"/></svg>
  <svg class="abs" style="left:836px;top:610px" width="9" height="6" viewBox="0 0 9 6"><path d="M0 0.500L4.500 5.500L9 0.500Z" fill="#a3a3a3"/></svg>
  <div class="abs" style="left:0;top:621px;width:833px;height:17px;background:#f1f1f1"></div>
  <div class="abs" style="left:833px;top:621px;width:15px;height:17px;background:#dcdcdc"></div>
  <svg class="abs" style="left:4px;top:625px" width="6" height="9" viewBox="0 0 6 9"><path d="M5.500 0L0.500 4.500L5.500 9Z" fill="#a3a3a3"/></svg>
  <svg class="abs" style="left:822px;top:625px" width="6" height="9" viewBox="0 0 6 9"><path d="M0.500 0L5.500 4.500L0.500 9Z" fill="#a3a3a3"/></svg>
  <!-- page -->
  <div class="abs" style="left:56px;top:109px;width:720px;height:405px;background:#fff;overflow:hidden">
    <svg class="abs" style="left:0;top:0" width="357" height="405" viewBox="127 0 357 405"><use href="#teamphoto" x="0" y="0" width="608" height="405"/></svg>
    <div class="abs" style="left:363px;top:0;width:357px;height:405px;background:#0f5081"></div>
    <div class="abs" style="left:379px;top:248px;width:300px;text-align:right;font-family:'DejaVu Serif','Liberation Serif',serif;font-size:32.800px;line-height:45px;color:#fff;white-space:nowrap;-webkit-text-stroke:1px #fff">Rencontrez<br>notre équipe</div>
    <div class="abs" style="left:652px;top:360px;width:28px;height:4px;background:#fff"></div>
  </div>
  <div class="abs" style="left:784px;top:108px;width:40px;height:40px;border-radius:20px;background:#fff;box-shadow:0 0 0 1px rgba(64,87,109,0.070),0 2px 6px rgba(57,76,96,0.150)"></div>
  <svg class="abs" style="left:792px;top:116px" width="24" height="24" viewBox="0 0 24 24" fill="none" stroke="#0e1318" stroke-width="1.600" stroke-linecap="round" stroke-linejoin="round"><path d="M14 5.300C13.400 5.200 12.700 5.100 12 5.100C7.600 5.100 4 8 4 11.600C4 15.200 7.600 18.100 12 18.100C12.500 18.100 13 18.100 13.400 18C13.300 19.300 12.700 20.300 11.700 21C14.300 20.800 16.400 19.500 17.600 17C19.100 15.800 20 14.100 20 12.300"/><path d="M18.500 3V9M15.500 6H21.500"/></svg>
</div>
<div id="bottom">
  <svg class="abs" style="left:383px;top:-13px" width="84" height="14" viewBox="0 0 84 14"><path d="M0 14C9 14 9 1 18 1H66C75 1 75 14 84 14Z" fill="#fff"/><path d="M38.500 8.500L42 12L45.500 8.500" stroke="#0e1318" stroke-width="1.500" fill="none"/></svg>
  <svg class="abs" style="left:16px;top:16px;border-radius:4px" width="85" height="48" viewBox="0 0 85 48"><defs><linearGradient id="t1a" x1="0" y1="0" x2="1" y2="1"><stop offset="0" stop-color="#0a3448"/><stop offset="0.450" stop-color="#1b558c"/><stop offset="1" stop-color="#082c45"/></linearGradient><filter id="t1b" x="-0.200" y="-0.200" width="1.400" height="1.400"><feGaussianBlur stdDeviation="1.600"/></filter></defs><rect width="85" height="48" fill="url(#t1a)"/><g filter="url(#t1b)"><polygon points="10,48 28,48 56,0 42,0" fill="#3f82c8" opacity="0.700"/><polygon points="52,48 66,48 76,0 60,0" fill="#2f72b8" opacity="0.800"/><polygon points="0,30 0,44 26,16 22,6" fill="#7fb2dd" opacity="0.550"/><ellipse cx="66" cy="29" rx="7" ry="6" fill="#dbe8f4" opacity="0.800"/><ellipse cx="30" cy="36" rx="5" ry="3" fill="#cfe0f0" opacity="0.600"/><polygon points="30,48 52,48 56,30 40,26" fill="#0d3a5c" opacity="0.800"/><rect x="0" y="0" width="20" height="12" fill="#0a3048" opacity="0.700"/><rect x="68" y="0" width="17" height="20" fill="#0b3552" opacity="0.700"/></g><text x="5" y="20.200" font-family="DejaVu Serif,Liberation Serif,serif" font-weight="bold" font-size="5.400" fill="#fff" textLength="41" lengthAdjust="spacingAndGlyphs">Pitch Deck App</text><text x="5" y="26.400" font-family="DejaVu Serif,Liberation Serif,serif" font-weight="bold" font-size="5.400" fill="#fff" textLength="17.500" lengthAdjust="spacingAndGlyphs">mobile</text><rect x="77" y="35.500" width="4" height="0.900" fill="#fff"/><rect x="70" y="39.500" width="11" height="0.500" fill="#dfe9f3"/><rect x="72.500" y="42" width="8.500" height="0.500" fill="#dfe9f3"/></svg>
  <div class="abs" style="left:113px;top:12px;width:93px;height:77px;border-radius:5px;background:#f0f1f3"></div>
  <div class="abs" style="left:113px;top:12px;width:93px;height:56px;border-radius:5px;border:2px solid #7a848e;background:#fff"></div>
  <div class="abs" style="left:117px;top:16px;width:85px;height:48px;border-radius:2px;overflow:hidden;background:#fff">
    <svg class="abs" style="left:0;top:0" width="42" height="48" viewBox="127 0 357 405" preserveAspectRatio="none"><use href="#teamphoto" x="0" y="0" width="608" height="405"/></svg>
    <div class="abs" style="left:43px;top:0;width:42px;height:48px;background:#0f5081"></div>
    <div class="abs" style="left:43px;top:29px;width:37px;text-align:right;font-family:'DejaVu Serif','Liberation Serif',serif;font-size:3.900px;line-height:5.300px;color:#fff;white-space:nowrap">Rencontrez<br>notre équipe</div>
    <div class="abs" style="left:77px;top:42.500px;width:3px;height:0.600px;background:#fff"></div>
  </div>
  <div class="abs" style="left:219px;top:16px;width:85px;height:48px;border-radius:4px;background:#f1f2f4"></div>
  <svg class="abs" style="left:253px;top:32px" width="17" height="17" viewBox="0 0 17 17"><path d="M8.500 1V16M1 8.500H16" stroke="#0e1318" stroke-width="1.600" fill="none" stroke-linecap="round"/></svg>
  <div class="abs dk" style="left:38.500px;top:70px;width:40px;text-align:center;font-size:11.500px;font-weight:bold;line-height:16px">1</div>
  <div class="abs dk" style="left:139.500px;top:70px;width:40px;text-align:center;font-size:11.500px;font-weight:bold;line-height:16px">2</div>
  <svg class="abs" style="left:14px;top:114px" width="22" height="20" viewBox="0 0 22 20" fill="none" stroke="#0e1318" stroke-width="1.600" stroke-linecap="round" stroke-linejoin="round"><path d="M2 4H14.500M2 8.500H11M2 13H7.500M2 17.500H4"/><path d="M9.500 17.500L10.300 14.300L17.300 7.300A1.400 1.400 0 0 1 19.300 9.300L12.300 16.300Z"/></svg>
  <div class="abs dk" style="left:44px;top:114px;font-size:14px;line-height:20px;font-weight:bold;white-space:nowrap">Remarques</div>
  <div class="abs" style="left:441px;top:123px;width:168px;height:2px;background:#dfe1e5"></div>
  <div class="abs" style="left:444.500px;top:117.500px;width:13px;height:13px;border-radius:7px;background:#0e1318"></div>
  <div class="abs dk" style="left:653px;top:114px;font-size:14px;line-height:20px;font-weight:bold;white-space:nowrap">38 %</div>
  <svg class="abs" style="left:721px;top:110px" width="26" height="26" viewBox="0 0 26 26" fill="none" stroke="#0e1318" stroke-width="1.500" stroke-linejoin="round"><path d="M6.500 2.500H21A2 2 0 0 1 23 4.500V19.500" stroke-linecap="round"/><rect x="2.500" y="5" width="18" height="18" rx="2" fill="#fff"/><text x="11.500" y="18" font-family="Liberation Sans,sans-serif" font-size="11" font-weight="bold" fill="#0e1318" stroke="none" text-anchor="middle">2</text></svg>
  <svg class="abs" style="left:764px;top:114px" width="20" height="20" viewBox="0 0 20 20" fill="none" stroke="#0e1318" stroke-width="1.600" stroke-linecap="round" stroke-linejoin="round"><path d="M12 2.500H17.500V8M17.500 2.500L11.500 8.500M8 17.500H2.500V12M2.500 17.500L8.500 11.500"/></svg>
  <div class="abs" style="left:798px;top:111px;width:1px;height:24px;background:#dfe2e6"></div>
  <svg class="abs" style="left:811px;top:113px" width="22" height="22" viewBox="0 0 22 22"><circle cx="11" cy="11" r="9.500" stroke="#0e1318" stroke-width="1.500" fill="none"/><text x="11" y="15.500" font-family="Liberation Sans,sans-serif" font-size="13" font-weight="bold" fill="#0e1318" text-anchor="middle">?</text></svg>
</div>
<div class="abs" style="left:0;top:958.500px;width:1280px;height:1.500px;background:#141414;z-index:6"></div>
<svg class="abs" style="left:366px;top:923px;z-index:7" width="14" height="22" viewBox="0 0 14 22"><path d="M1 1V17.500L4.800 14L7.600 20.500L10 19.500L7.200 13.200H12.300Z" fill="#000" stroke="#fff" stroke-width="1.100" stroke-linejoin="round"/></svg>
<div class="abs" style="left:1279px;top:128px;width:1px;height:832px;background:#2a2a2a"></div>
</body>
</html>
